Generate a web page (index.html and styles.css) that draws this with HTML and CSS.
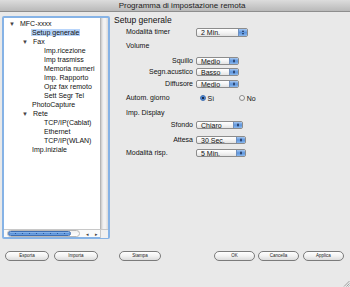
FILE: index.html
```html
<!DOCTYPE html>
<html>
<head>
<meta charset="utf-8">
<link rel="stylesheet" href="styles.css">
</head>
<body>
<div class="window">
  <div class="titlebar">Programma di impostazione remota</div>
  <div class="main">
    <div class="tree">
      <div class="tree-body">
        <div class="tree-list">
          <div class="node l0"><span class="tri">▼</span>MFC-xxxx</div>
          <div class="node l1"><span class="sel">Setup generale</span></div>
          <div class="node l1t"><span class="tri">▼</span>Fax</div>
          <div class="node l2">Imp.ricezione</div>
          <div class="node l2">Imp trasmiss</div>
          <div class="node l2">Memoria numeri</div>
          <div class="node l2">Imp. Rapporto</div>
          <div class="node l2">Opz fax remoto</div>
          <div class="node l2">Sett Segr Tel</div>
          <div class="node l1">PhotoCapture</div>
          <div class="node l1t"><span class="tri">▼</span>Rete</div>
          <div class="node l2">TCP/IP(Cablat)</div>
          <div class="node l2">Ethernet</div>
          <div class="node l2">TCP/IP(WLAN)</div>
          <div class="node l1">Imp.iniziale</div>
        </div>
        <div class="vscroll"></div>
      </div>
      <div class="hscroll">
        <div class="htrack"><div class="hthumb"><span class="grip"></span></div></div>
        <div class="harrows"><span>◂</span><span>▸</span></div>
        <div class="corner"></div>
      </div>
    </div>
    <div class="form">
      <div class="heading">Setup generale</div>

      <div class="lbl left">Modalità timer</div>
      <div class="ctl"><div class="popup w52"><span class="pv">2 Min.</span><span class="arr"></span></div></div>

      <div class="lbl left span">Volume</div>

      <div class="lbl right">Squillo</div>
      <div class="ctl"><div class="popup w43"><span class="pv">Medio</span><span class="arr"></span></div></div>

      <div class="lbl right">Segn.acustico</div>
      <div class="ctl"><div class="popup w43"><span class="pv">Basso</span><span class="arr"></span></div></div>

      <div class="lbl right">Diffusore</div>
      <div class="ctl"><div class="popup w43"><span class="pv">Medio</span><span class="arr"></span></div></div>

      <div class="lbl left">Autom. giorno</div>
      <div class="ctl radios">
        <span class="radio on"></span><span class="rl">Sì</span>
        <span class="radio off"></span><span class="rl">No</span>
      </div>

      <div class="lbl left span">Imp. Display</div>

      <div class="lbl right">Sfondo</div>
      <div class="ctl"><div class="popup w47"><span class="pv">Chiaro</span><span class="arr"></span></div></div>

      <div class="lbl right">Attesa</div>
      <div class="ctl"><div class="popup w50"><span class="pv">30 Sec.</span><span class="arr"></span></div></div>

      <div class="lbl left">Modalità risp.</div>
      <div class="ctl"><div class="popup w50"><span class="pv">5 Min.</span><span class="arr"></span></div></div>
    </div>
  </div>
  <div class="buttons">
    <div class="btn b-esp">Esporta</div>
    <div class="btn b-imp">Importa</div>
    <div class="btn b-sta">Stampa</div>
    <div class="spacer"></div>
    <div class="btn b-ok">OK</div>
    <div class="btn b-can">Cancella</div>
    <div class="btn b-app">Applica</div>
  </div>
  <svg class="grip-r" width="7" height="7" viewBox="0 0 7 7">
    <path d="M6.5 1 L1 6.5 M6.5 3.5 L3.5 6.5 M6.5 5.5 L5.5 6.5" stroke="#8a8a8a" stroke-width="0.8" fill="none"/>
  </svg>
</div>
</body>
</html>
```

FILE: styles.css
```css
* { box-sizing: border-box; }
html, body { margin: 0; padding: 0; }
body {
  width: 350px;
  height: 287px;
  overflow: hidden;
  font-family: "Liberation Sans", Arial, sans-serif;
  color: #111;
}
.window {
  position: relative;
  width: 350px;
  height: 287px;
  background: #e9e9e9;
  display: flex;
  flex-direction: column;
}
.titlebar {
  height: 12px;
  background: linear-gradient(#dcdcdc, #b9b9b9);
  border-bottom: 1px solid #8e8e8e;
  font-size: 8px;
  line-height: 11px;
  text-align: center;
  padding-left: 14px;
  color: #222;
}
.main {
  display: flex;
  align-items: flex-start;
}
.tree {
  margin-left: 2px;
  margin-top: 4px;
  width: 108px;
  height: 223px;
  border: 2px solid #86b3e6;
  border-radius: 2px;
  background: #fff;
  display: flex;
  flex-direction: column;
}
.tree-body {
  flex: 1;
  display: flex;
}
.tree-list {
  flex: 1;
  padding-top: 1px;
  font-size: 7px;
}
.node {
  height: 9px;
  line-height: 9px;
  white-space: nowrap;
}
.node.l0 { padding-left: 5px; }
.node.l1 { padding-left: 28px; }
.node.l1t { padding-left: 18px; }
.node.l2 { padding-left: 40px; }
.tri {
  display: inline-block;
  width: 11px;
  font-size: 6px;
  color: #444;
}
.sel {
  background: #b8d5fb;
  padding: 0 1px;
  margin-left: -1px;
}
.vscroll {
  width: 8px;
  background: linear-gradient(90deg, #c9c9c9, #efefef 30%, #f4f4f4 60%, #d9d9d9);
  border-left: 1px solid #b5b5b5;
}
.hscroll {
  height: 8px;
  display: flex;
  align-items: center;
  border-top: 1px solid #c8c8c8;
  background: #fafafa;
}
.htrack {
  margin-left: 3px;
  width: 75px;
  height: 7px;
  border: 1px solid #b8b8b8;
  border-radius: 4px;
  background: linear-gradient(#f0f0f0, #fff);
  display: flex;
}
.hthumb {
  width: 63px;
  height: 5px;
  border-radius: 3px;
  background: linear-gradient(#9cc3f0, #4f8ad6 60%, #7fb0ea);
  border: 1px solid #3c6db2;
  display: flex;
  align-items: center;
  justify-content: center;
}
.grip {
  width: 50px;
  height: 1px;
  background: repeating-linear-gradient(90deg, #2c5a9c 0 1px, transparent 1px 7px);
}
.harrows {
  width: 17px;
  margin-left: 4px;
  font-size: 5px;
  color: #444;
  display: flex;
  justify-content: space-around;
}
.corner {
  width: 8px;
  height: 8px;
  margin-left: auto;
  background: #f0f0f0;
  border-left: 1px solid #c8c8c8;
}
.form {
  margin-left: 4px;
  display: grid;
  grid-template-columns: 12px 67px 3px auto;
  grid-template-rows: 12px 14px 15px 11px 12px 14px 15px 12px 15px 13px 10px;
  padding-top: 3px;
  font-size: 7px;
}
.heading {
  grid-column: 1 / 5;
  font-size: 8.5px;
  line-height: 10px;
  height: 10px;
}
.lbl {
  grid-column: 2;
  height: 10px;
  line-height: 10px;
  white-space: nowrap;
}
.lbl.span { grid-column: 2 / 5; }
.lbl.right { text-align: right; }
.ctl {
  grid-column: 4;
  height: 10px;
  display: flex;
  align-items: center;
}
.popup {
  height: 8px;
  border: 1px solid #8c8c8c;
  border-radius: 2px;
  background: linear-gradient(#ffffff, #f4f4f4 50%, #e2e2e2);
  display: flex;
  align-items: center;
  overflow: hidden;
}
.w52 { width: 52px; height: 9px; }
.w43 { width: 43px; }
.w47 { width: 47px; }
.w50 { width: 50px; }
.pv {
  flex: 1;
  padding-left: 4px;
  font-size: 7px;
  line-height: 7px;
  color: #111;
}
.arr {
  width: 9px;
  height: 100%;
  border-left: 1px solid #6e8fbe;
  background: linear-gradient(#a6c8f2, #5d95dc 50%, #8ab8ee);
  position: relative;
}
.arr::before, .arr::after {
  content: "";
  position: absolute;
  left: 2.5px;
  border-left: 1.5px solid transparent;
  border-right: 1.5px solid transparent;
}
.arr::before { top: 1px; border-bottom: 2px solid #1c2f55; }
.arr::after { bottom: 1px; border-top: 2px solid #1c2f55; }
.radio {
  width: 6px;
  height: 6px;
  border-radius: 50%;
  display: inline-block;
}
.radio.on {
  margin-left: 4px;
  background: radial-gradient(circle, #1d2c4a 0 1.2px, #4f8ad6 1.6px, #8fbcf0 3px);
  border: 0.5px solid #3c6db2;
}
.radio.off {
  margin-left: 25px;
  background: linear-gradient(#fff, #e4e4e4);
  border: 0.5px solid #8c8c8c;
}
.rl { margin-left: 1.5px; font-size: 7px; }
.buttons {
  margin-top: 12px;
  display: flex;
  align-items: center;
  height: 10px;
}
.btn {
  height: 10px;
  border: 1px solid #7b7b7b;
  border-radius: 5px;
  background: linear-gradient(#ffffff, #f2f2f2 50%, #dcdcdc);
  font-size: 4.5px;
  line-height: 8px;
  text-align: center;
  color: #222;
}
.b-esp { margin-left: 5px; width: 44px; }
.b-imp { margin-left: 5px; width: 44px; }
.b-sta { margin-left: 21px; width: 42px; }
.spacer { width: 53px; }
.b-ok { width: 41px; }
.b-can { margin-left: 3px; width: 41px; }
.b-app { margin-left: 4px; width: 41px; }
.grip-r {
  position: absolute;
  right: 0;
  bottom: 0;
}
```
